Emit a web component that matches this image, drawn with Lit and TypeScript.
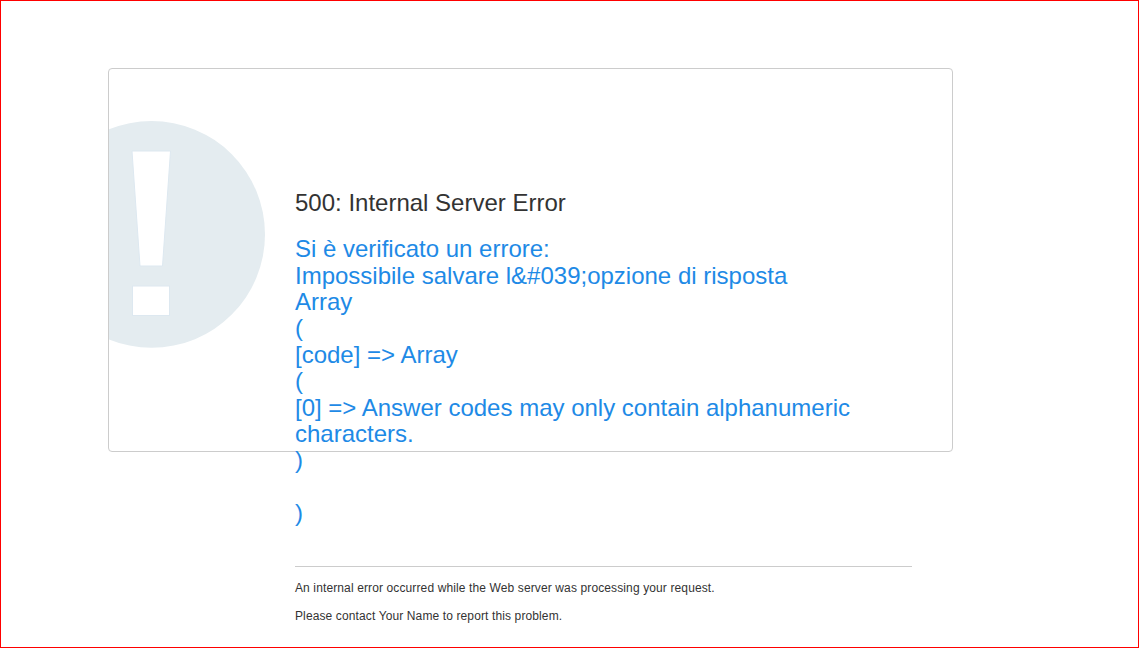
import { LitElement, html, css } from "lit";
import { customElement } from "lit/decorators.js";

@customElement("app-root")
export class AppRoot extends LitElement {
  static styles = css`
    :host {
      display: block;
      box-sizing: border-box;
      width: 1139px;
      height: 648px;
      border: 1px solid #ff0000;
      background: #fff;
      overflow: hidden;
      font-family: "Liberation Sans", Arial, sans-serif;
    }
    .card {
      position: relative;
      box-sizing: border-box;
      width: 845px;
      height: 384px;
      margin: 67px 0 0 107px;
      border: 1px solid #ccc;
      border-radius: 4px;
    }
    .art {
      position: absolute;
      inset: 0;
      overflow: hidden;
      border-radius: 3px;
    }
    .art svg {
      display: block;
    }
    .content {
      position: relative;
      width: 617px;
      margin-left: 186px;
      padding-top: 120px;
      display: flex;
      flex-direction: column;
    }
    h1 {
      margin: 0 0 20.2px;
      font-size: 24px;
      line-height: 27px;
      font-weight: 400;
      color: #333;
    }
    .msg {
      margin: 0;
      font-size: 24px;
      line-height: 26.4px;
      color: #1e8ae6;
    }
    hr {
      width: 100%;
      height: 1px;
      margin: 39.8px 0 0;
      border: 0;
      background: #ccc;
    }
    .note {
      margin: 14px 0 0;
      font-size: 12px;
      line-height: 14px;
      letter-spacing: 0.12px;
      color: #333;
    }
  `;

  render() {
    return html`
      <div class="card">
        <div class="art">
          <svg width="843" height="382" viewBox="0 0 843 382" aria-hidden="true">
            <circle cx="42.6" cy="165.4" r="113.4" fill="#e4ecf0"></circle>
            <path d="M23 82H61.500L53.500 197H31Z" fill="#fff" stroke="#dde8f0" stroke-width="1"></path>
            <rect x="23.500" y="217" width="37" height="29.500" fill="#fff" stroke="#dde8f0" stroke-width="1"></rect>
          </svg>
        </div>
        <div class="content">
          <h1>500: Internal Server Error</h1>
          <p class="msg">
            Si è verificato un errore:<br />
            Impossibile salvare l&amp;#039;opzione di risposta<br />
            Array<br />
            (<br />
            [code] =&gt; Array<br />
            (<br />
            [0] =&gt; Answer codes may only contain alphanumeric characters.<br />
            )<br />
            <br />
            )
          </p>
          <hr />
          <p class="note">An internal error occurred while the Web server was processing your request.</p>
          <p class="note">Please contact Your Name to report this problem.</p>
        </div>
      </div>
    `;
  }
}
